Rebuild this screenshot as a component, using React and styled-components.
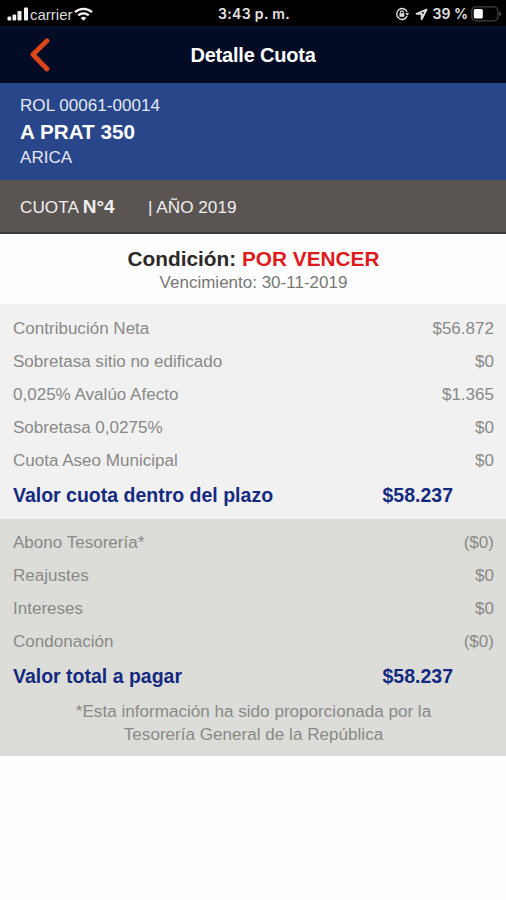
import styled, { createGlobalStyle } from 'styled-components'

const FONT = `'Liberation Sans', Arial, sans-serif`

const GlobalStyle = createGlobalStyle`
  * {
    box-sizing: border-box;
  }

  body {
    margin: 0;
    background: #fefefe;
    font-family: ${FONT};
  }
`

const Screen = styled.div`
  width: 100%;
  min-height: 900px;
  background: #fefefe;
`

const StatusBar = styled.div`
  display: grid;
  grid-template-columns: 1fr auto 1fr;
  align-items: center;
  height: 26px;
  padding: 1px 4px 0 7px;
  background: #000;
  color: #e4e4e4;
  font-size: 14.5px;
  line-height: 24px;
`

const StatusGroup = styled.div`
  display: flex;
  align-items: center;
  gap: ${props => props.$end ? '6px' : '1px'};
  justify-content: ${props => props.$end ? 'flex-end' : 'flex-start'};

  svg {
    flex: none;
  }
`

const Carrier = styled.span`
  padding-top: 2px;
  color: #dcdcdc;
  font-size: 15px;
`

const Clock = styled.span`
  padding-right: 1px;
  font-family: Inter, ${FONT};
  font-size: 14px;
  font-weight: 600;
  letter-spacing: 0.35px;
`

const Percent = styled.span`
  margin: 0 -3px 0 -1px;
  font-family: Inter, ${FONT};
  font-size: 14px;
  font-weight: 600;
`

const NavBar = styled.header`
  display: grid;
  grid-template-columns: 60px 1fr 60px;
  align-items: center;
  height: 57px;
  background: #030b25;
`

const BackButton = styled.button`
  display: flex;
  padding: 0 0 0 29px;
  border: 0;
  background: none;
`

const Title = styled.h1`
  margin: 0;
  color: #fff;
  font-size: 20px;
  font-weight: bold;
  letter-spacing: -0.2px;
  line-height: 24px;
  text-align: center;
`

const Property = styled.section`
  height: 97px;
  padding: 11px 20px 0;
  background: #284689;
  color: #e3e8f4;
  font-size: 17.1px;
  line-height: 24px;

  strong {
    display: block;
    color: #fff;
    font-size: 20.7px;
    line-height: 28px;
  }
`

const Period = styled.section`
  display: flex;
  align-items: baseline;
  height: 54px;
  padding: 15px 20px 0;
  border-bottom: 2px solid #3f3b3a;
  background: #5a5553;
  color: #f0efee;
  font-size: 17.2px;
  line-height: 24px;
`

const Installment = styled.div`
  width: 128px;

  strong {
    font-size: 19px;
  }
`

const Condition = styled.section`
  height: 70px;
  padding: 12px 0 0 1px;
  text-align: center;
`

const State = styled.div`
  color: #2b2827;
  font-size: 20.8px;
  font-weight: bold;
  line-height: 26px;

  span {
    color: #e01a1c;
  }
`

const DueDate = styled.div`
  color: #777;
  font-size: 17px;
  line-height: 22px;
`

const Breakdown = styled.section`
  height: ${props => props.$height}px;
  padding: ${props => props.$top}px 12px 0 13px;
  background: ${props => props.$dark ? '#dcddd8' : '#f1f1f1'};
`

const Row = styled.div`
  display: flex;
  justify-content: space-between;
  color: #898987;
  font-size: 17.05px;
  line-height: 33px;
`

const Total = styled.div`
  display: flex;
  justify-content: space-between;
  padding: 1px 41px 0 0;
  color: #142a80;
  font-size: 19.5px;
  font-weight: bold;
  line-height: 35px;
`

const Note = styled.p`
  width: 370px;
  margin: 6px auto 0;
  color: #898987;
  font-size: 17.1px;
  line-height: 23px;
  text-align: center;
`

const charges = [
  { label: 'Contribución Neta', value: '$56.872' },
  { label: 'Sobretasa sitio no edificado', value: '$0' },
  { label: '0,025% Avalúo Afecto', value: '$1.365' },
  { label: 'Sobretasa 0,0275%', value: '$0' },
  { label: 'Cuota Aseo Municipal', value: '$0' },
]

const adjustments = [
  { label: 'Abono Tesorería*', value: '($0)' },
  { label: 'Reajustes', value: '$0' },
  { label: 'Intereses', value: '$0' },
  { label: 'Condonación', value: '($0)' },
]

function SignalIcon() {
  return (
    <svg width="22" height="14" viewBox="0 0 22 14" fill="#f2f2f2">
      <rect x="0.5" y="9.5" width="3.7" height="4" rx="1" />
      <rect x="5.5" y="7.5" width="3.7" height="6" rx="1" />
      <rect x="10.5" y="4" width="4" height="9.5" rx="1" />
      <rect x="17" y="0.5" width="4" height="13" rx="1" />
    </svg>
  )
}

function WifiIcon() {
  return (
    <svg width="19" height="14" viewBox="0 0 19 14" fill="none" stroke="#f2f2f2" strokeWidth="2.3">
      <path d="M1 5.2a12.3 12.3 0 0 1 17 0" />
      <path d="M4.3 8.4a7.6 7.6 0 0 1 10.4 0" />
      <path d="M9.5 13.8 6.7 11a4 4 0 0 1 5.6 0z" fill="#f2f2f2" stroke="none" />
    </svg>
  )
}

function RotationLockIcon() {
  return (
    <svg width="14" height="14" viewBox="0 0 14 14" fill="none" stroke="#dedede" strokeWidth="1.4">
      <path d="M12.1 5A5.4 5.4 0 1 0 12.1 9" />
      <path d="M10.4 6H14l-1.6 2.7z" fill="#dedede" stroke="none" />
      <rect x="4.4" y="6.3" width="5" height="3.5" rx="0.6" fill="#dedede" stroke="none" />
      <path d="M5.4 6.5V5.4a1.5 1.5 0 0 1 3 0v1.1" strokeWidth="1.1" />
    </svg>
  )
}

function LocationIcon() {
  return (
    <svg width="13" height="13" viewBox="0 0 13 13" fill="none" stroke="#dedede" strokeWidth="1.9" strokeLinejoin="round">
      <path d="M11.5 1.5 1.6 5.900h5.100v5.100z" />
    </svg>
  )
}

function BatteryIcon() {
  return (
    <svg width="31" height="16" viewBox="0 0 31 16">
      <rect x="0.8" y="0.8" width="26" height="14" rx="4" fill="none" stroke="#414141" strokeWidth="1.3" />
      <rect x="2.8" y="3" width="9" height="9.6" rx="1.5" fill="#fff" />
      <path d="M28 5.4c1.8.6 2.4 1.4 2.4 2.4s-.6 1.8-2.4 2.4z" fill="#414141" />
    </svg>
  )
}

function BackIcon() {
  return (
    <svg width="22" height="34" viewBox="0 0 22 34" fill="none" stroke="#dc4419" strokeWidth="4.8" strokeLinecap="round" strokeLinejoin="round">
      <path d="M18 2.8 3.9 16.5 18 31" />
    </svg>
  )
}

function App() {
  return (
    <>
      <GlobalStyle />
      <Screen>
        <StatusBar>
          <StatusGroup>
            <SignalIcon />
            <Carrier>carrier</Carrier>
            <WifiIcon />
          </StatusGroup>
          <Clock>3:43 p. m.</Clock>
          <StatusGroup $end>
            <RotationLockIcon />
            <LocationIcon />
            <Percent>39 %</Percent>
            <BatteryIcon />
          </StatusGroup>
        </StatusBar>

        <NavBar>
          <BackButton aria-label="Volver">
            <BackIcon />
          </BackButton>
          <Title>Detalle Cuota</Title>
        </NavBar>

        <Property>
          ROL 00061-00014
          <strong>A PRAT 350</strong>
          ARICA
        </Property>

        <Period>
          <Installment>CUOTA <strong>N°4</strong></Installment>
          <span>| AÑO 2019</span>
        </Period>

        <Condition>
          <State>Condición: <span>POR VENCER</span></State>
          <DueDate>Vencimiento: 30-11-2019</DueDate>
        </Condition>

        <Breakdown $height={215} $top={8}>
          {charges.map(item => (
            <Row key={item.label}>
              <span>{item.label}</span>
              <span>{item.value}</span>
            </Row>
          ))}
          <Total>
            <span>Valor cuota dentro del plazo</span>
            <span>$58.237</span>
          </Total>
        </Breakdown>

        <Breakdown $dark $height={237} $top={7}>
          {adjustments.map(item => (
            <Row key={item.label}>
              <span>{item.label}</span>
              <span>{item.value}</span>
            </Row>
          ))}
          <Total>
            <span>Valor total a pagar</span>
            <span>$58.237</span>
          </Total>
          <Note>*Esta información ha sido proporcionada por la Tesorería General de la República</Note>
        </Breakdown>
      </Screen>
    </>
  )
}

export default App
